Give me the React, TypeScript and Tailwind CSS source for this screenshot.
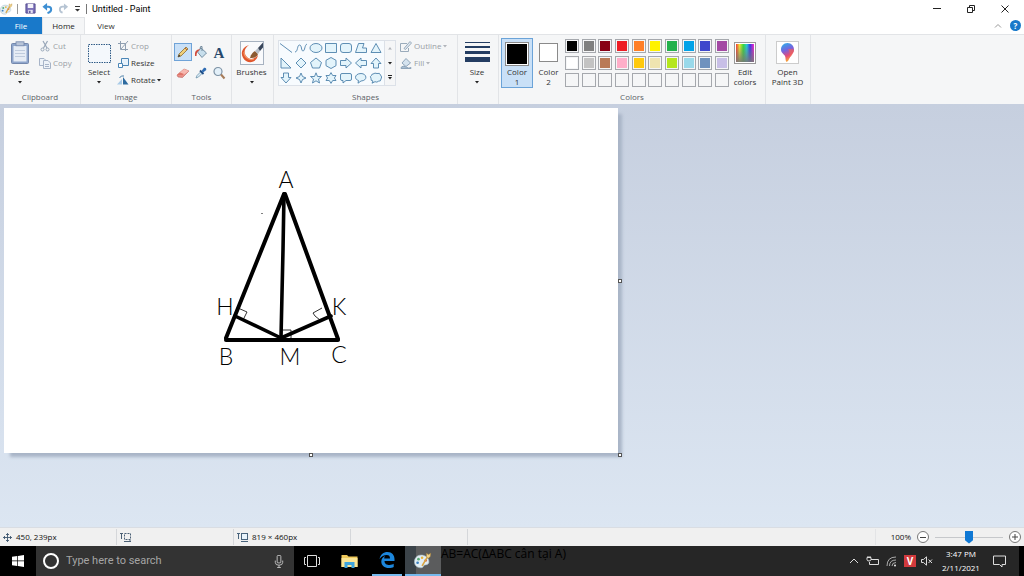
import { useState } from 'react';
import type { ReactNode } from 'react';

const COLORS = [
  '#000000', '#7f7f7f', '#880015', '#ed1c24', '#ff7f27', '#fff200', '#22b14c', '#00a2e8', '#3f48cc', '#a349a4',
  '#ffffff', '#c3c3c3', '#b97a57', '#ffaec9', '#ffc90e', '#efe4b0', '#b5e61d', '#99d9ea', '#7092be', '#c8bfe7',
  '', '', '', '', '', '', '', '', '', '',
];

// one entry per shape, drawn in a 14x12 box
const SHAPES = [
  { name: 'Line', d: 'M1 1.5 L13 10.5' },
  { name: 'Curve', d: 'M1 10 C4 10 3 3 5.5 3 C8 3 7 9 9 9 C11 9 10.500 3 13 2' },
  { name: 'Oval', d: 'M1 6 A6 4.500 0 1 0 13 6 A6 4.500 0 1 0 1 6' },
  { name: 'Rectangle', d: 'M1.5 1.5 H12.5 V10.5 H1.5 Z' },
  { name: 'Rounded rectangle', d: 'M4 1.5 H10 Q12.5 1.5 12.5 4 V8 Q12.5 10.5 10 10.5 H4 Q1.5 10.5 1.5 8 V4 Q1.5 1.500 4 1.5 Z' },
  { name: 'Polygon', d: 'M4.5 1.5 H10 L8.500 6 H12.5 V10.5 H1.500 Z' },
  { name: 'Triangle', d: 'M7 1.5 L12 10.5 H2 Z' },
  { name: 'Right triangle', d: 'M2 1 V11 H12 Z' },
  { name: 'Diamond', d: 'M7 1 L12 6 L7 11 L2 6 Z' },
  { name: 'Pentagon', d: 'M7 1 L12.500 5.500 L10.5 11 H3.5 L1.500 5.500 Z' },
  { name: 'Hexagon', d: 'M7 .5 L12 3.300 V8.700 L7 11.5 L2 8.700 V3.300 Z' },
  { name: 'Right arrow', d: 'M1.5 3.5 H7 V1 L12.5 6 L7 11 V8.5 H1.5 Z' },
  { name: 'Left arrow', d: 'M12.5 3.5 H7 V1 L1.5 6 L7 11 V8.5 H12.5 Z' },
  { name: 'Up arrow', d: 'M4.5 11 V6.500 H2 L7 1 L12 6.500 H9.5 V11 Z' },
  { name: 'Down arrow', d: 'M4.5 1 V5.500 H2 L7 11 L12 5.500 H9.5 V1 Z' },
  { name: 'Four-point star', d: 'M7 1 L8.500 4.500 L12 6 L8.500 7.500 L7 11 L5.500 7.500 L2 6 L5.500 4.500 Z' },
  { name: 'Five-point star', d: 'M7 .8 L8.500 4.500 H12.500 L9.500 7 L10.500 11 L7 8.800 L3.500 11 L4.500 7 L1.500 4.500 H5.500 Z' },
  { name: 'Six-point star', d: 'M7 .6 L8.700 3.500 H12 L10.400 6 L12 8.500 H8.700 L7 11.400 L5.300 8.500 H2 L3.600 6 L2 3.500 H5.300 Z' },
  { name: 'Rounded callout', d: 'M3 1.500 H11 Q12.5 1.500 12.5 3 V7 Q12.500 8.500 11 8.500 H7 L4 11 V8.500 H3 Q1.5 8.500 1.5 7 V3 Q1.5 1.500 3 1.5 Z' },
  { name: 'Oval callout', d: 'M4.500 8.500 C-.5 7 1 1.500 7 1.500 C13 1.500 14 8.700 7 9 L4 11.200 Z' },
  { name: 'Cloud callout', d: 'M4 2 Q6 .5 8 1.500 Q11 .5 11.500 3 Q13.500 5 12 7 Q12 9.500 9.500 9.200 Q8 10.800 6 9.700 L3 11.200 L4 9 Q1.500 9 2 6.500 Q.5 4 2.500 3.500 Q2.500 2 4 2 Z' },
];

function Caret({ dim = false }: { dim?: boolean }) {
  return (
    <svg viewBox="0 0 4 3" className={`h-[3px] w-1 ${dim ? 'fill-[#b0b4ba]' : 'fill-[#222]'}`} aria-hidden="true">
      <path d="M0 0 H4 L2 2.600 Z" />
    </svg>
  );
}

function Group({ label, className = '', children }: { label?: string; className?: string; children: ReactNode }) {
  return (
    <section className={`flex shrink-0 flex-col border-r border-[#e2e4e7] pt-[3px] ${className}`}>
      <div className="flex h-[50px]">{children}</div>
      <h2 className="mt-[3px] h-3 text-center leading-3 text-[#5a5f66]">{label}</h2>
    </section>
  );
}

type BigProps = { icon: ReactNode; lines: string[]; caret?: boolean; className?: string };

function BigButton({ icon, lines, caret = false, className = '' }: BigProps) {
  return (
    <button className={`flex h-[50px] flex-col items-center ${className}`}>
      <span className="flex h-[29px] items-center justify-center">{icon}</span>
      {lines.map((l) => (
        <span key={l} className="h-[10px] leading-[10px] whitespace-nowrap">{l}</span>
      ))}
      {caret && <span className="flex h-[10px] items-center"><Caret /></span>}
    </button>
  );
}

type SmallProps = { icon: ReactNode; text: string; dim?: boolean; caret?: boolean };

function SmallButton({ icon, text, dim = false, caret = false }: SmallProps) {
  return (
    <button disabled={dim} className={`flex h-4 items-center gap-[2px] ${dim ? 'text-[#9a9ea5]' : ''}`}>
      <svg viewBox="0 0 12 12" className="size-3" fill="none" aria-hidden="true">{icon}</svg>
      <span className="whitespace-nowrap">{text}</span>
      {caret && <Caret dim={dim} />}
    </button>
  );
}

function PaletteIcon({ className }: { className: string }) {
  return (
    <svg viewBox="0 0 20 18" className={className} aria-hidden="true">
      <path d="M8 3 C3 3 .5 7 .5 10.500 C.5 15 4 17.500 8.500 17 C11 16.500 10 14.500 12 14 C15 13.500 17 13 16.500 9.500 C16 5.500 12 3 8 3 Z" fill="#e3eef4" stroke="#a5bcc8" strokeWidth=".7" />
      <circle cx="5" cy="7.500" r="1.500" fill="#5aab78" />
      <circle cx="9" cy="6" r="1.400" fill="#e7b53c" />
      <circle cx="4" cy="11.500" r="1.500" fill="#3c7fc0" />
      <circle cx="13" cy="9" r="1.500" fill="#cf6350" />
      <path d="M9 15 L15 5" stroke="#d9a441" strokeWidth="1.800" />
      <path d="M14 5 L14 1 L16 2.500 L18.500 1 L18 4.500 L16 6.500 Z" fill="#efd48c" stroke="#b8862f" strokeWidth=".5" />
    </svg>
  );
}

function TitleBar() {
  return (
    <header className="flex h-[17px] items-center bg-white">
      <PaletteIcon className="h-3 w-[13px]" />
      <span className="ml-1 h-[10px] w-px bg-[#999]" />
      <button aria-label="Save" className="ml-[7px]">
        <svg viewBox="0 0 12 12" className="size-[11px]">
          <path d="M1 1 H11 V11 H1 Z" fill="#7a6fb8" stroke="#52498c" />
          <path d="M3 1 H9 V5.500 H3 Z" fill="#f3f2fa" />
          <path d="M3.500 7.500 H8.500 V11 H3.500 Z" fill="#e4e1f2" />
          <path d="M4.500 8.500 H6 V11 H4.500 Z" fill="#52498c" />
        </svg>
      </button>
      <button aria-label="Undo" className="ml-[6px]">
        <svg viewBox="0 0 12 12" className="size-[11px]" fill="none">
          <path d="M3 4 H7 Q10 4 10 7 Q10 9.500 6 11" stroke="#3d8fd3" strokeWidth="2.200" />
          <path d="M.5 4.200 L5.500 0 V8.500 Z" fill="#3d8fd3" />
        </svg>
      </button>
      <button aria-label="Redo" className="ml-[5px]" disabled>
        <svg viewBox="0 0 12 12" className="size-[11px]" fill="none">
          <path d="M9 4 H5 Q2 4 2 7 Q2 9.500 5 10.500" stroke="#b6c4d3" strokeWidth="2" />
          <path d="M11 4.200 L6.500 .5 V8 Z" fill="#b6c4d3" />
        </svg>
      </button>
      <button aria-label="Customize Quick Access Toolbar" className="ml-[6px]">
        <svg viewBox="0 0 5 6" className="h-[6px] w-[5px]" fill="#333"><path d="M0 0 H5 V1 H0 Z M0 3 H5 L2.500 5.500 Z" /></svg>
      </button>
      <span className="ml-[6px] h-[10px] w-px bg-[#777]" />
      <h1 className="ml-[5px] font-['Roboto',sans-serif] text-[9px] text-black">Untitled - Paint</h1>
      <div className="ml-auto flex items-center gap-[26px] pr-[15px]">
        <button aria-label="Minimize">
          <svg viewBox="0 0 8 8" className="size-2" stroke="#222" fill="none"><path d="M0 3.500 H8" /></svg>
        </button>
        <button aria-label="Restore">
          <svg viewBox="0 0 8 8" className="size-2" stroke="#222" fill="none"><path d="M.5 2.500 H5.500 V7.500 H.5 Z M2.500 2.500 V.5 H7.500 V5.500 H5.500" /></svg>
        </button>
        <button aria-label="Close">
          <svg viewBox="0 0 8 8" className="size-2" stroke="#222" fill="none"><path d="M.5 .5 L7.500 7.500 M7.500 .5 L.5 7.500" /></svg>
        </button>
      </div>
    </header>
  );
}

function Tabs() {
  return (
    <nav className="flex h-[17px] items-stretch bg-white">
      <button className="w-[42px] bg-[#1979ca] text-white">File</button>
      <button className="w-[43px] border-x border-t border-[#e2e4e7] bg-[#f5f6f7] text-[#222]">Home</button>
      <button className="w-[42px] text-[#333]">View</button>
      <div className="ml-auto flex items-center gap-2 pr-[3px]">
        <button aria-label="Collapse ribbon">
          <svg viewBox="0 0 8 8" className="size-2" stroke="#999" fill="none"><path d="M1 5.500 L4 2.500 L7 5.500" /></svg>
        </button>
        <button aria-label="Help" className="size-[11px] rounded-full bg-[#1979ca] text-[8px] leading-[11px] font-bold text-white">?</button>
      </div>
    </nav>
  );
}

function Ribbon() {
  const [active, setActive] = useState(0);

  return (
    <div className="flex h-[70px] overflow-hidden border-t border-[#e2e4e7] bg-[#f5f6f7]">
      <Group label="Clipboard" className="w-[81px]">
        <BigButton
          className="w-[39px]"
          caret
          lines={['Paste']}
          icon={
            <svg viewBox="0 0 20 24" className="h-6 w-5">
              <rect x="1.500" y="2.500" width="17" height="20" rx="1" fill="#8fa6cc" stroke="#7488ad" />
              <rect x="3.500" y="5" width="13" height="15.500" fill="#e6ecf5" />
              <path d="M5 9.500 H15 M5 12.500 H15 M5 15.500 H15" stroke="#bfcbdd" />
              <rect x="6" y=".8" width="8" height="4" fill="#b8c4d8" stroke="#7488ad" strokeWidth=".8" />
            </svg>
          }
        />
        <div className="flex flex-col gap-px">
          <SmallButton dim text="Cut" icon={<g stroke="#98a6b8"><path d="M4 1 L8 8 M8.500 1 L4.500 8" strokeWidth="1.200" /><circle cx="3.500" cy="9.500" r="1.500" /><circle cx="8.500" cy="9.500" r="1.500" /></g>} />
          <SmallButton dim text="Copy" icon={<g fill="#edf2f8" stroke="#a7b4c8"><path d="M.5 1.500 H5 L6.500 3 V8.500 H.5 Z" /><path d="M4.500 3.500 H9 L11.500 6 V11.500 H4.500 Z M6 7.500 H10 M6 9.500 H10" /></g>} />
        </div>
      </Group>

      <Group label="Image" className="w-[91px]">
        <BigButton
          className="w-[36px]"
          caret
          lines={['Select']}
          icon={
            <svg viewBox="0 0 23 20" className="mt-[2px] h-5 w-[23px]">
              <rect x=".5" y=".5" width="22" height="18" fill="#f4f8fc" stroke="#2f5a86" strokeDasharray="1.500 1" />
            </svg>
          }
        />
        <div className="flex flex-col gap-px">
          <SmallButton dim text="Crop" icon={<path d="M3.500 1 V9.500 H11 M1 3.500 H8.500 V11 M4 9 L11 1" stroke="#8f9fb1" />} />
          <SmallButton text="Resize" icon={<g fill="#e8f2fb" stroke="#4c86b6"><path d="M4.500 1.500 H11.500 V8.500 H4.500 Z" /><path d="M1.500 6.500 H5.500 V10.500 H1.500 Z" fill="#fff" /></g>} />
          <SmallButton caret text="Rotate" icon={<><path d="M0 10.500 L5 5 V10.500 Z" fill="#a9cbe8" /><path d="M6 3 L11.500 10.500 H6 Z" fill="#2d6a9f" /><path d="M2.500 4 Q4 1 7 2" stroke="#4b7fa8" /></>} />
        </div>
      </Group>

      <Group label="Tools" className="w-[60px]">
        <div className="ml-[2px] grid grid-cols-[18px_18px_18px] grid-rows-[18px_18px] content-start gap-y-[3px] pt-[5px]">
          <button aria-label="Pencil" className="flex items-center justify-center border border-[#6fa3d8] bg-[#c9e0f7]">
            <svg viewBox="0 0 14 14" className="size-[14px]"><path d="M2 12 L3 9 L10 2 L12 4 L5 11 Z" fill="#f0cf78" stroke="#8c6d35" strokeWidth=".8" /><path d="M2 12 L3 9.500 L4.500 11 Z" fill="#333" /><path d="M9 3 L11 5" stroke="#b5603f" /></svg>
          </button>
          <button aria-label="Fill with color" className="flex items-center justify-center">
            <svg viewBox="0 0 14 14" className="size-[14px]"><path d="M7 3 L12.500 8 L8 12.500 L3.500 7 Z" fill="#c7deec" stroke="#5a7990" strokeWidth=".8" /><path d="M8 6 V1.500 Q6 .5 6 4" fill="none" stroke="#71889b" /><path d="M1 11 Q0 4.500 6 4 L4.500 6 Q2.500 7 2.500 11 Z" fill="#d24a3b" /></svg>
          </button>
          <button aria-label="Text" className="pt-[2px] font-['Liberation_Serif',serif] text-[15px] leading-4 font-bold text-[#27496d]">A</button>
          <button aria-label="Eraser" className="flex items-center justify-center">
            <svg viewBox="0 0 14 14" className="size-[14px]"><path d="M1 9 L8 3 L13 5 L6.500 11.500 L2 11 Z" fill="#e98f88" stroke="#b9605b" strokeWidth=".6" /><path d="M1 9 L6.500 9.500 L13 5 L8 3 Z" fill="#f6b8b0" /><path d="M1 9 L4 6.500 L8 8 L6.500 9.500 Z" fill="#df7468" /></svg>
          </button>
          <button aria-label="Color picker" className="flex items-center justify-center">
            <svg viewBox="0 0 14 14" className="size-[14px]"><path d="M2 12 L3 9.500 L7 5.500 L8.500 7 L4.500 11 Z" fill="#d9ebf5" stroke="#5e88a3" strokeWidth=".7" /><path d="M6 4.500 L9.500 8" stroke="#1f4d85" strokeWidth="1.800" /><path d="M7.500 5 L10 1.800 Q12.500 1 12.300 4 L9 6.500 Z" fill="#2f6cb3" /></svg>
          </button>
          <button aria-label="Magnifier" className="flex items-center justify-center">
            <svg viewBox="0 0 14 14" className="size-[14px]"><circle cx="6" cy="5.500" r="4" fill="#e3f0f9" stroke="#7d92a5" strokeWidth="1.200" /><path d="M9 8.500 L12.500 12.500" stroke="#a67c5a" strokeWidth="2" /></svg>
          </button>
        </div>
      </Group>

      <Group className="w-[42px]">
        <BigButton
          className="w-[39px]"
          caret
          lines={['Brushes']}
          icon={
            <svg viewBox="0 0 24 24" className="size-6">
              <rect x=".5" y=".5" width="23" height="23" fill="#f9fafc" stroke="#a7b2c0" />
              <path d="M9 4 C0 7 0 16 6 20 C11 23 17 20 18 14 C14 19 9 19 6 15 C3 11 5 7 9 4 Z" fill="#e0562c" />
              <path d="M4 11 C4 16 9 20 14 18" fill="none" stroke="#f29468" strokeWidth="1.200" />
              <path d="M10 17 C11 13 13 11 15 10 L18 13 C17 16 14 17 10 17 Z" fill="#8c5a32" />
              <path d="M15 10 L18 7 L20 10 L18 13 Z" fill="#b7bfc9" />
              <path d="M18 7 L23 1.500 V6.500 L20 10 Z" fill="#39465a" />
            </svg>
          }
        />
      </Group>

      <Group label="Shapes" className="w-[184px]">
        <div className="mt-[2px] ml-1 flex h-[46px] w-[118px] border border-[#dce1e8] bg-[#f7fbfe]">
          <div className="grid grid-cols-[repeat(7,15px)] content-around">
            {SHAPES.map((s) => (
              <button key={s.name} aria-label={s.name}>
                <svg viewBox="0 0 14 12" className="h-3 w-[14px]" fill="#e3f4fb" stroke="#4e82ab" strokeWidth=".9">
                  <path d={s.d} className={s.name === 'Line' || s.name === 'Curve' ? 'fill-none' : ''} />
                </svg>
              </button>
            ))}
          </div>
          <div className="flex flex-1 flex-col border-l border-[#dce1e8] bg-[#f5f6f7]">
            <button aria-label="Scroll up" className="flex flex-1 rotate-180 items-center justify-center"><Caret dim /></button>
            <button aria-label="Scroll down" className="flex flex-1 items-center justify-center"><Caret /></button>
            <button aria-label="More shapes" className="flex flex-1 flex-col items-center justify-center gap-px"><span className="h-px w-1 bg-[#222]" /><Caret /></button>
          </div>
        </div>
        <div className="ml-1 flex flex-col gap-px">
          <SmallButton dim caret text="Outline" icon={<g stroke="#9aabbb"><path d="M.5 3.500 H7 M.5 3.500 V11.500 H8.500 V8" /><path d="M4 8.500 L10 1.500 L11.500 3 L5.500 9.500 Z" fill="#dfe9f2" /></g>} />
          <SmallButton dim caret text="Fill" icon={<g stroke="#8fa5ba"><path d="M6 1.500 L10.500 6 L6 9.500 L2 6 Z" fill="#d5e3ef" /><path d="M1 10.500 Q3 8 6 10 T11 10.500 V11.500 H1 Z" fill="#a9bfd3" /></g>} />
        </div>
      </Group>

      <Group className="w-[41px]">
        <BigButton
          className="w-[38px]"
          caret
          lines={['Size']}
          icon={
            <svg viewBox="0 0 25 22" className="h-[22px] w-[25px] fill-[#243d62]">
              <path d="M0 0 H25 V1 H0 Z M0 4 H25 V6 H0 Z M0 9 H25 V12 H0 Z M0 15 H25 V20 H0 Z" />
            </svg>
          }
        />
      </Group>

      <Group label="Colors" className="w-[267px]">
        <BigButton
          className="ml-[2px] w-8 border border-[#6ba3d8] bg-[#c9e0f7]"
          lines={['Color', '1']}
          icon={<span className="mt-px size-6 border border-[#8a8a8a] bg-black outline outline-[#fff] -outline-offset-2" />}
        />
        <BigButton
          className="w-[31px]"
          lines={['Color', '2']}
          icon={<span className="size-[19px] border border-[#8a8a8a] bg-white" />}
        />
        <div className="mt-px ml-[1px] grid h-12 w-[164px] grid-cols-[repeat(10,14px)] grid-rows-[repeat(3,14px)] content-between justify-between">
          {COLORS.map((c, i) => (
            <button
              key={i}
              aria-label={c ? `Color ${c}` : 'Empty color'}
              onClick={() => setActive(i)}
              aria-pressed={active === i}
              className="border border-[#a5a8ad] p-px"
            >
              <span className="block size-full" style={{ backgroundColor: c || '#f5f6f7' }} />
            </button>
          ))}
        </div>
        <BigButton
          className="w-[32px]"
          lines={['Edit', 'colors']}
          icon={
            <svg viewBox="0 0 22 22" className="size-[22px]">
              <defs>
                <linearGradient id="hue">
                  <stop offset="0" stopColor="#f33" /><stop offset=".2" stopColor="#ee3" /><stop offset=".4" stopColor="#3d3" />
                  <stop offset=".6" stopColor="#2cd" /><stop offset=".78" stopColor="#33e" /><stop offset="1" stopColor="#f2c" />
                </linearGradient>
                <linearGradient id="shade" x2="0" y2="1"><stop stopColor="#777" stopOpacity="0" /><stop offset="1" stopColor="#777" stopOpacity=".9" /></linearGradient>
              </defs>
              <rect x=".5" y=".5" width="21" height="21" fill="#fff" stroke="#999" />
              <rect x="2" y="2" width="18" height="18" fill="url(#hue)" />
              <rect x="2" y="2" width="18" height="18" fill="url(#shade)" />
            </svg>
          }
        />
      </Group>

      <Group className="w-[45px]">
        <BigButton
          className="w-[43px]"
          lines={['Open', 'Paint 3D']}
          icon={
            <svg viewBox="0 0 23 23" className="size-[23px]">
              <defs>
                <linearGradient id="drop" x1="0" y1="0" x2=".3" y2="1">
                  <stop stopColor="#22b8ee" /><stop offset=".45" stopColor="#7763dd" /><stop offset=".75" stopColor="#e64a79" /><stop offset="1" stopColor="#f6a13a" />
                </linearGradient>
              </defs>
              <rect x=".5" y=".5" width="22" height="22" fill="#fff" stroke="#ccc" />
              <path d="M11.500 2 C7.500 2 5 5 5 8.500 C5 12 8 13 9 15 C10 17 9 19 10.500 21 C13 20 13 17 15 14.500 C17 12 18 11 18 8.500 C18 5 15.500 2 11.500 2 Z" fill="url(#drop)" />
              <path d="M12 8 Q17 8 18 9 Q17 14 13 17 Q15 12 12 8 Z" fill="#f0645a" opacity=".7" />
            </svg>
          }
        />
      </Group>
    </div>
  );
}

const HANDLE = 'absolute size-[4px] border border-[#555] bg-white';

function Canvas() {
  return (
    <main className="flex-1 bg-linear-to-b from-[#c6cfdf] to-[#dce6f2] px-1 pt-1">
      <div className="relative w-[614px] bg-white shadow-[5px_5px_3px_-1px_#a9b5c7]">
        <svg viewBox="4 108 614 345" className="block w-full" fill="none" stroke="#000" role="img" aria-label="Triangle ABC">
          <g strokeWidth="4" strokeLinecap="round" strokeLinejoin="round">
            <path d="M284 194 L226 338 M285 194 L338 339" />
            <path d="M226 340 H338" />
            <path d="M284 194 L283 250 L281 338" strokeWidth="3.600" />
            <path d="M235 316 L281 338 L331 316" strokeWidth="3.600" />
          </g>
          <path d="M238 308 L247 312 L243 320" strokeWidth=".8" />
          <path d="M322 308 L313 313 L315 316 L320 320" strokeWidth=".8" />
          <path d="M283 330 H291 V338" strokeWidth=".8" />
          <path d="M261.500 213.500 H262.500" />
          {/* vertex labels */}
          <g className="fill-black font-['Lato',sans-serif] text-[23px] font-light" stroke="none" textAnchor="middle">
            <text x="286" y="188">A</text>
            <text x="225" y="315">H</text>
            <text x="339" y="315">K</text>
            <text x="226" y="365">B</text>
            <text x="290" y="365">M</text>
            <text x="339" y="363">C</text>
          </g>
        </svg>
        <span className={`${HANDLE} top-1/2 left-full -translate-y-1/2`} />
        <span className={`${HANDLE} top-full left-1/2 -translate-x-1/2`} />
        <span className={`${HANDLE} top-full left-full`} />
      </div>
    </main>
  );
}

function StatusBar() {
  const [zoom, setZoom] = useState(50);
  const cell = 'flex w-[117px] items-center gap-1 border-r border-[#d5d7da] pl-[3px]';

  return (
    <footer className="flex h-[19px] items-stretch border-t border-[#d9dde3] bg-[#f0f0f0] py-px text-[#111]">
      <div className={cell}>
        <svg viewBox="0 0 9 9" className="size-[9px]" stroke="#3d566e" fill="none"><path d="M4.500 0 V9 M0 4.500 H9 M3 1.500 H6 M3 7.500 H6 M1.500 3 V6 M7.500 3 V6" strokeWidth=".9" /></svg>
        <span>450, 239px</span>
      </div>
      <div className={cell}>
        <svg viewBox="0 0 11 10" className="h-[10px] w-[11px]" stroke="#4a5f74" fill="none"><path d="M1.500 1 V7 M0 1.500 H3 M4 9.500 H11 M10 8 V10" /><rect x="4.500" y="1.500" width="6" height="6" strokeDasharray="2 1" /></svg>
      </div>
      <div className={cell}>
        <svg viewBox="0 0 11 10" className="h-[10px] w-[11px]" stroke="#48637c" fill="none"><path d="M1.500 1 V7 M0 1.500 H3 M4 9.500 H11" /><rect x="4.500" y="1.500" width="6" height="6" fill="#e8f3fb" /></svg>
        <span>819 × 460px</span>
      </div>
      <div className={cell} />
      <div className="flex flex-1 items-center justify-end border-r border-[#e3e4e6]" />
      <div className="flex w-[148px] items-center justify-end gap-[6px] pr-[3px]">
        <span>100%</span>
        <button aria-label="Zoom out" onClick={() => setZoom(Math.max(0, zoom - 10))} className="flex size-3 items-center justify-center rounded-full border border-[#777] bg-white">
          <span className="h-px w-[6px] bg-[#444]" />
        </button>
        <input
          type="range"
          aria-label="Zoom"
          value={zoom}
          onChange={(e) => setZoom(Number(e.target.value))}
          className="h-[13px] w-[68px] appearance-none bg-[linear-gradient(#c6c8cb,#c6c8cb)] bg-size-[100%_1px] bg-center bg-no-repeat [&::-webkit-slider-thumb]:h-[13px] [&::-webkit-slider-thumb]:w-2 [&::-webkit-slider-thumb]:appearance-none [&::-webkit-slider-thumb]:bg-[#0f78d4] [&::-webkit-slider-thumb]:[clip-path:polygon(0_0,100%_0,100%_75%,50%_100%,0_75%)]"
        />
        <button aria-label="Zoom in" onClick={() => setZoom(Math.min(100, zoom + 10))} className="flex size-3 items-center justify-center rounded-full border border-[#777] bg-white">
          <svg viewBox="0 0 6 6" className="size-[6px]" stroke="#444"><path d="M3 0 V6 M0 3 H6" /></svg>
        </button>
      </div>
    </footer>
  );
}

function Taskbar() {
  return (
    <div className="flex h-[30px] items-stretch bg-[#262626] text-white">
      <button aria-label="Start" className="flex w-9 items-center justify-center bg-black">
        <svg viewBox="0 0 12 12" className="size-3 fill-white"><path d="M0 1.700 L5.300 1 V5.600 H0 Z M6 .9 L12 0 V5.600 H6 Z M0 6.300 H5.300 V11 L0 10.300 Z M6 6.300 H12 V12 L6 11.100 Z" /></svg>
      </button>
      <label className="flex w-[258px] items-center gap-[7px] bg-[#333] pr-[10px] pl-[7px]">
        <span className="size-4 shrink-0 rounded-full border-2 border-white" />
        <input type="text" placeholder="Type here to search" aria-label="Search" className="min-w-0 flex-1 bg-transparent font-['Roboto',sans-serif] text-[11px] placeholder:text-[#a5a5a5]" />
        <svg viewBox="0 0 10 14" className="h-[13px] w-[10px]" stroke="#c4c4c4" fill="none"><rect x="3" y=".5" width="4" height="8" rx="1" /><path d="M1 6 V8 Q1 11 5 11 Q9 11 9 8 V6 M5 11 V13.500 M3 13.500 H7" /></svg>
      </label>
      <button aria-label="Task View" className="flex w-[35px] items-center justify-center bg-black">
        <svg viewBox="0 0 16 12" className="h-3 w-4" stroke="#ddd" fill="none"><path d="M3.500 .5 H12.500 V11.500 H3.500 Z M2 2.500 H.5 V9.500 H2 M14 2.500 H15.500 V9.500 H14" /></svg>
      </button>
      <button aria-label="File Explorer" className="flex w-[43px] items-center justify-center bg-black pr-[3px]">
        <svg viewBox="0 0 17 15" className="h-[15px] w-[17px]"><path d="M.5 1 H6 L7.500 2.500 H16.500 V13 H.5 Z" fill="#f0c95a" /><path d="M.5 4 H16.500 V13 H.5 Z" fill="#fbe595" /><path d="M3.500 8 H13.500 V14 H10.500 V11 H6.500 V14 H3.500 Z" fill="#3fa4dc" /></svg>
      </button>
      <button aria-label="Microsoft Edge" className="flex w-[30px] items-center justify-center border-b-2 border-[#76b9ed] bg-black">
        <svg viewBox="0 0 16 16" className="size-4 fill-[#1c86dc]"><path d="M.5 7 C1.500 2.500 4.500 0 8.500 0 C13 0 15.500 3.300 15.500 7 V9 H5.500 C5.500 12 8 13 10.500 13 C12.500 13 13.700 12.400 14.700 11.800 V15 C13.500 15.600 12 16 9.800 16 C5.500 16 2.300 13.500 2.300 9.500 C2.300 7 3.800 5 6 4 C5.500 4.800 5.200 5.500 5.200 6.400 H11 C11 4.200 10 3 7.800 3 C5 3 2.300 4.500 .5 7 Z" /></svg>
      </button>
      <div className="w-[3px] bg-black" />
      <button aria-label="Paint" className="flex w-9 items-center justify-center border-b-2 border-[#76b9ed] bg-linear-to-r from-[#3b4349] from-30% to-[#5b5c5d] to-30%">
        <PaletteIcon className="h-[17px] w-[18px]" />
      </button>
      <p className="text-[12px] leading-4 text-black">AB=AC(ΔABC cân tại A)</p>
      <div className="ml-auto flex items-center gap-[7px] border-r-[5px] border-black pr-[13px]">
        <svg viewBox="0 0 10 10" className="size-[10px]" stroke="#ddd" fill="none"><path d="M1 7 L5 3 L9 7" /></svg>
        <svg viewBox="0 0 13 10" className="h-[10px] w-[13px]" stroke="#ddd" fill="none"><path d="M5 3.500 H12.500 V8.500 H3.500 V6 M1 1.500 H5 V3.500 Q5 5 3 5 Q1 5 1 3.500 Z M2 0 V1.500 M4 0 V1.500" /></svg>
        <svg viewBox="0 0 11 11" className="size-[11px]" stroke="#aaa" fill="none"><path d="M1 10 Q1 1 10 1 M3.500 10 Q3.500 4 10 4 M6 10 Q6 6.500 10 6.500" /><circle cx="9" cy="9.500" r="1" fill="#eee" stroke="none" /></svg>
        <span className="flex size-3 items-center justify-center bg-[#d13a3d] text-[10px] leading-3 font-bold">V</span>
        <svg viewBox="0 0 12 10" className="-ml-[2px] h-[10px] w-3" stroke="#ddd" fill="none"><path d="M.5 3.500 H2.500 L5.500 .8 V9.200 L2.500 6.500 H.5 Z M7.500 3.500 L11 7 M11 3.500 L7.500 7" /></svg>
        <div className="w-[42px] text-center leading-[14px]">
          <div>3:47 PM</div>
          <div>2/11/2021</div>
        </div>
        <button aria-label="Notifications" className="ml-1">
          <svg viewBox="0 0 13 13" className="size-[13px]" stroke="#ddd" fill="none"><path d="M.5 1 H12.500 V9.500 H9 V12 L6.500 9.500 H.5 Z" /></svg>
        </button>
      </div>
    </div>
  );
}

export default function App() {
  return (
    <div className="flex min-h-screen flex-col font-['Open_Sans','Noto_Sans',sans-serif] text-[8px] leading-3 text-[#333]">
      <TitleBar />
      <Tabs />
      <Ribbon />
      <Canvas />
      <StatusBar />
      <Taskbar />
    </div>
  );
}
